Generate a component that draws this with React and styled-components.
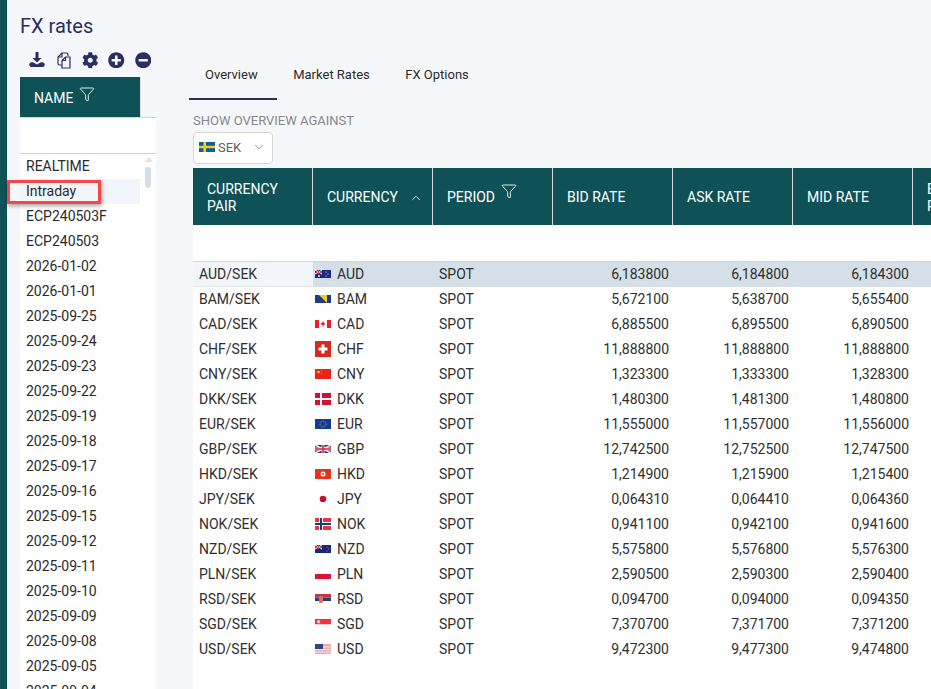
import styled, { createGlobalStyle } from "styled-components"
import { FaCog, FaPlusCircle, FaMinusCircle } from "react-icons/fa"
import { Filter, ChevronUp, ChevronDown } from "lucide-react"

const GlobalStyle = createGlobalStyle`
html, body {
  margin: 0;
  height: 100%;
  overflow: hidden;
  background: #f6f7fa;
  font-family: Roboto, "Liberation Sans", sans-serif;
  font-size: 14px;
  color: #2b2b2b;
}
`

const Page = styled.div`
display: flex;
height: 689px;
overflow: hidden;
`
const Strip = styled.div`
width: 7px;
flex-shrink: 0;
background: #0e5257;
`
const Main = styled.div`
flex: 1;
min-width: 0;
padding-left: 13px;
`
const Title = styled.h1`
margin: 0;
height: 48px;
padding-top: 13px;
box-sizing: border-box;
font-size: 20px;
line-height: 26px;
font-weight: 400;
color: #2c2e63;
`
const Columns = styled.div`
display: flex;
`
const LeftPanel = styled.div`
width: 136px;
flex-shrink: 0;
`
const Toolbar = styled.div`
display: flex;
align-items: center;
gap: 8.5px;
height: 29px;
padding-left: 8px;
padding-bottom: 5px;
box-sizing: border-box;
color: #2c2e63;
`
const ToolIcon = styled.span`
display: flex;
width: 18px;
height: 18px;
align-items: center;
justify-content: center;
font-size: 16.5px;
`
const NameHeader = styled.div`
display: flex;
height: 40px;
`
const NameCell = styled.div`
width: 121px;
box-sizing: border-box;
padding: 2px 0 0 14px;
display: flex;
align-items: center;
gap: 6px;
background: #0e5257;
color: #fff;
border-right: 1px solid #e0e2e2;
`
const FilterIcon = styled(Filter)`
width: 16px;
height: 16px;
margin-bottom: ${p => p.$lift}px;
stroke-width: 1.3;
color: #fff;
`
const NameFilter = styled.div`
height: 35px;
background: #fff;
border-top: 1px solid #d3d5d6;
border-bottom: 1px solid #d3d5d6;
`
const List = styled.div`
position: relative;
background: #fff;
height: 535px;
`
const ListRow = styled.div`
position: relative;
width: 120px;
height: 25px;
line-height: 25px;
padding-left: 6px;
box-sizing: border-box;
background: ${p => (p.$active ? "#f2f5f9" : "transparent")};
`
const RedBox = styled.div`
position: absolute;
left: -13px;
top: 1px;
width: 94px;
height: 24px;
box-sizing: border-box;
border: 3px solid #f4474b;
box-shadow: 1px 2px 4px rgba(0, 0, 0, 0.35);
`
const ScrollArrow = styled.div`
position: absolute;
left: 125px;
top: 3px;
width: 0;
height: 0;
border-left: 4px solid transparent;
border-right: 4px solid transparent;
border-bottom: 5px solid #dde4ea;
`
const ScrollThumb = styled.div`
position: absolute;
left: 125px;
top: 13px;
width: 6px;
height: 21px;
border-radius: 3px;
background: #d5dfe8;
`
const RightPanel = styled.div`
flex: 1;
min-width: 0;
padding-left: 33px;
`
const Tabs = styled.div`
display: flex;
height: 52px;
margin-bottom: 13px;
`
const Tab = styled.div`
padding: 0 19.5px 0 16px;
line-height: 54px;
font-size: 13px;
color: #2b2b2b;
box-sizing: border-box;
border-bottom: 2px solid ${p => (p.$active ? "#2c2e63" : "transparent")};
`
const Content = styled.div`
padding-left: 4px;
`
const Label = styled.div`
font-size: 13px;
line-height: 16px;
color: #85888a;
margin-bottom: 3px;
`
const Select = styled.div`
display: flex;
align-items: center;
width: 80px;
height: 32px;
box-sizing: border-box;
padding: 0 0 2px 5px;
gap: 3px;
background: #fff;
border: 1px solid #d6d6cf;
border-radius: 4px;
font-size: 13px;
color: #5c5f62;
margin-bottom: 4px;
`
const SelectChevron = styled(ChevronDown)`
width: 14px;
height: 14px;
margin-left: 8px;
stroke-width: 1.2;
color: #666;
`
const Table = styled.table`
table-layout: fixed;
border-collapse: separate;
border-spacing: 0;
width: 840px;
background: #fff;
`
const Th = styled.th`
width: 120px;
height: 57px;
box-sizing: border-box;
padding: 2px 8px 0 14px;
background: #0e5257;
color: #fff;
font-weight: 400;
font-size: 14px;
line-height: 17px;
text-align: left;
border-right: 1px solid #d5d8d8;
white-space: ${p => (p.$wrap ? "normal" : "nowrap")};
`
const ThInner = styled.div`
display: flex;
align-items: center;
gap: 6px;
`
const SortIcon = styled(ChevronUp)`
width: 14px;
height: 14px;
margin-left: 5px;
stroke-width: 1.3;
`
const FilterRow = styled.td`
height: 36px;
padding: 0;
border-bottom: 1px solid #d3d5d6;
`
const Td = styled.td`
height: 25px;
box-sizing: border-box;
padding: 0 ${p => (p.$num ? "4px" : "0")} 2px 6px;
text-align: ${p => (p.$num ? "right" : "left")};
color: #2f2f2f;
background: ${p => (p.$pair ? "#f2f5f9" : p.$on ? "#d5dfe8" : "transparent")};
box-shadow: ${p => (p.$pair ? "inset 0 -1px 0 #e3e8ed" : "none")};
`
const CurrencyCell = styled.div`
display: flex;
align-items: center;
gap: 6px;
margin-left: -4px;
`
const Spacer = styled.td`
height: 40px;
padding: 0;
`

const Svg = ({ children }) => (
  <svg width="16" height="16" viewBox="0 0 16 16">{children}</svg>
)
const Band = ({ c, y = 4, h = 8 }) => <rect x="0" y={y} width="16" height={h} fill={c} />
const Jack = () => (
  <g>
    <rect x="0" y="4" width="7" height="4" fill="#27306e" />
    <path d="M0 4l7 4M7 4L0 8" stroke="#fff" strokeWidth="1" />
    <path d="M3.5 4v4M0 6h7" stroke="#e0455a" strokeWidth="1" />
  </g>
)

const flags = {
  AUD: <Svg><Band c="#1d2a80" /><Jack /><circle cx="11" cy="6" r=".6" fill="#fff" /><circle cx="13" cy="8" r=".6" fill="#fff" /><circle cx="11" cy="10" r=".6" fill="#fff" /><circle cx="4" cy="10" r=".9" fill="#fff" /></Svg>,
  BAM: <Svg><Band c="#1a3a8c" /><path d="M4 4h8v8z" fill="#f7c91a" /></Svg>,
  CAD: <Svg><Band c="#fff" /><rect y="4" width="4" height="8" fill="#ee1c25" /><rect x="12" y="4" width="4" height="8" fill="#ee1c25" /><path d="M8 5l1 2 1-.3-.5 2.3H8.3V11h-.6V9H6.500L6 6.700 7 7z" fill="#ee1c25" /></Svg>,
  CHF: <Svg><rect width="16" height="16" fill="#d8281f" /><path d="M6.500 3.500h3v3h3v3h-3v3h-3v-3h-3v-3h3z" fill="#fff" /></Svg>,
  CNY: <Svg><Band c="#e8231a" y="3" h="10" /><circle cx="3.500" cy="6" r="1.300" fill="#f8d50d" /><circle cx="6.500" cy="5" r=".4" fill="#f8d50d" /><circle cx="6.500" cy="7.500" r=".4" fill="#f8d50d" /></Svg>,
  DKK: <Svg><rect y="2" width="16" height="12" fill="#d21034" /><rect x="5" y="2" width="2" height="12" fill="#fff" /><rect y="7" width="16" height="2" fill="#fff" /></Svg>,
  EUR: <Svg><Band c="#113a9c" y="3" h="10" /><circle cx="8" cy="8" r="3" fill="none" stroke="#e5c825" strokeWidth=".8" strokeDasharray="1 1" /></Svg>,
  GBP: <Svg><Band c="#27306e" /><path d="M0 4l16 8M16 4L0 12" stroke="#f1dfe3" strokeWidth="1.600" /><path d="M8 4v8M0 8h16" stroke="#f1dfe3" strokeWidth="3" /><path d="M8 4v8M0 8h16" stroke="#d8283f" strokeWidth="1.600" /></Svg>,
  HKD: <Svg><Band c="#e8321c" y="3" h="10" /><circle cx="8" cy="8" r="2.500" fill="#fff" /><circle cx="8" cy="8" r="1" fill="#e8321c" /></Svg>,
  JPY: <Svg><circle cx="8" cy="8" r="3.300" fill="#c8102e" /></Svg>,
  NOK: <Svg><rect y="2" width="16" height="12" fill="#ef3340" /><rect x="4" y="2" width="4" height="12" fill="#fff" /><rect y="6" width="16" height="4" fill="#fff" /><rect x="5" y="2" width="2" height="12" fill="#1a3a7c" /><rect y="7" width="16" height="2" fill="#1a3a7c" /></Svg>,
  NZD: <Svg><Band c="#142a7a" /><Jack /><circle cx="12" cy="6" r=".7" fill="#e33" /><circle cx="13.500" cy="8" r=".7" fill="#e33" /><circle cx="12" cy="10" r=".7" fill="#e33" /></Svg>,
  PLN: <Svg><rect y="4" width="16" height="4" fill="#fff" /><rect y="8" width="16" height="5" fill="#dc143c" /></Svg>,
  RSD: <Svg><rect y="3" width="16" height="3.500" fill="#c6363c" /><rect y="6.500" width="16" height="3.500" fill="#2a3c7c" /><rect y="10" width="16" height="3.500" fill="#fff" /><rect x="4" y="5" width="4" height="7" rx="1.500" fill="#c9766f" /></Svg>,
  SGD: <Svg><rect y="3" width="16" height="5.500" fill="#ef3340" /><circle cx="3.500" cy="5.700" r="1.800" fill="#f8c4c4" /><rect y="8.500" width="16" height="5" fill="#fff" /></Svg>,
  USD: <Svg><rect y="3" width="16" height="10" fill="#e9aab0" /><path d="M0 6h16M0 8.500h16M0 11h16" stroke="#f8eaea" strokeWidth="1" /><rect y="3" width="8" height="5" fill="#2e4585" /></Svg>,
  SEK: <Svg><Band c="#0a5fa8" y="3" h="10" /><rect x="4.500" y="3" width="2.500" height="10" fill="#f7cf1a" /><rect y="6.800" width="16" height="2.400" fill="#f7cf1a" /></Svg>,
}

const names = ["REALTIME", "Intraday", "ECP240503F", "ECP240503", "2026-01-02", "2026-01-01", "2025-09-25", "2025-09-24", "2025-09-23", "2025-09-22", "2025-09-19", "2025-09-18", "2025-09-17", "2025-09-16", "2025-09-15", "2025-09-12", "2025-09-11", "2025-09-10", "2025-09-09", "2025-09-08", "2025-09-05", "2025-09-04"]

const rates = [
  ["AUD", "6,183800", "6,184800", "6,184300"],
  ["BAM", "5,672100", "5,638700", "5,655400"],
  ["CAD", "6,885500", "6,895500", "6,890500"],
  ["CHF", "11,888800", "11,888800", "11,888800"],
  ["CNY", "1,323300", "1,333300", "1,328300"],
  ["DKK", "1,480300", "1,481300", "1,480800"],
  ["EUR", "11,555000", "11,557000", "11,556000"],
  ["GBP", "12,742500", "12,752500", "12,747500"],
  ["HKD", "1,214900", "1,215900", "1,215400"],
  ["JPY", "0,064310", "0,064410", "0,064360"],
  ["NOK", "0,941100", "0,942100", "0,941600"],
  ["NZD", "5,575800", "5,576800", "5,576300"],
  ["PLN", "2,590500", "2,590300", "2,590400"],
  ["RSD", "0,094700", "0,094000", "0,094350"],
  ["SGD", "7,370700", "7,371700", "7,371200"],
  ["USD", "9,472300", "9,477300", "9,474800"],
]

function App() {
  return (
    <Page>
      <GlobalStyle />
      <Strip />
      <Main>
        <Title>FX rates</Title>
        <Columns>
          <LeftPanel>
            <Toolbar>
              <ToolIcon>
                <svg width="18" height="18" viewBox="0 0 18 18" fill="#2c2e63">
                  <path d="M7.500 1h3v6h3L9 11.500 4.500 7h3z" />
                  <path d="M1.500 12.500c1-1.300 2.500-1.500 4-1L9 13.500l3.500-2c1.500-.5 3-.3 4 1 .7 1.500 0 3.500-2 3.500H3.500c-2 0-2.700-2-2-3.500z" />
                </svg>
              </ToolIcon>
              <ToolIcon>
                <svg width="18" height="18" viewBox="0 0 18 18" fill="none" stroke="#2c2e63" strokeWidth="1.200">
                  <path d="M7 14H4.500C3.500 14 3 13.500 3 12.500V6l4-4h4.500c1 0 1.500.5 1.500 1.500V5" />
                  <path d="M7 2v4H3" />
                  <path d="M7 9.500L10.500 6H15v11H7z" fill="#f6f7fa" />
                  <path d="M10.500 6v3.500H7" />
                </svg>
              </ToolIcon>
              <ToolIcon><FaCog /></ToolIcon>
              <ToolIcon><FaPlusCircle /></ToolIcon>
              <ToolIcon><FaMinusCircle /></ToolIcon>
            </Toolbar>
            <NameHeader>
              <NameCell>NAME <FilterIcon $lift={9} /></NameCell>
            </NameHeader>
            <NameFilter />
            <List>
              <ScrollArrow />
              <ScrollThumb />
              {names.map(n => (
                <ListRow key={n} $active={n === "Intraday"}>
                  {n}
                  {n === "Intraday" && <RedBox />}
                </ListRow>
              ))}
            </List>
          </LeftPanel>
          <RightPanel>
            <Tabs>
              <Tab $active>Overview</Tab>
              <Tab>Market Rates</Tab>
              <Tab>FX Options</Tab>
            </Tabs>
            <Content>
              <Label>SHOW OVERVIEW AGAINST</Label>
              <Select>{flags.SEK}SEK<SelectChevron /></Select>
              <Table>
                <thead>
                  <tr>
                    <Th $wrap>CURRENCY PAIR</Th>
                    <Th><ThInner>CURRENCY <SortIcon /></ThInner></Th>
                    <Th><ThInner>PERIOD <FilterIcon $lift={14} /></ThInner></Th>
                    <Th>BID RATE</Th>
                    <Th>ASK RATE</Th>
                    <Th>MID RATE</Th>
                    <Th $wrap>EXPIRY PERIOD</Th>
                  </tr>
                </thead>
                <tbody>
                  <tr><FilterRow colSpan={7} /></tr>
                  {rates.map((r, i) => (
                    <tr key={r[0]}>
                      <Td $pair={i === 0}>{r[0]}/SEK</Td>
                      <Td $on={i === 0}><CurrencyCell>{flags[r[0]]}{r[0]}</CurrencyCell></Td>
                      <Td $on={i === 0}>SPOT</Td>
                      <Td $on={i === 0} $num>{r[1]}</Td>
                      <Td $on={i === 0} $num>{r[2]}</Td>
                      <Td $on={i === 0} $num>{r[3]}</Td>
                      <Td $on={i === 0} />
                    </tr>
                  ))}
                  <tr><Spacer colSpan={7} /></tr>
                </tbody>
              </Table>
            </Content>
          </RightPanel>
        </Columns>
      </Main>
    </Page>
  )
}

export default App
